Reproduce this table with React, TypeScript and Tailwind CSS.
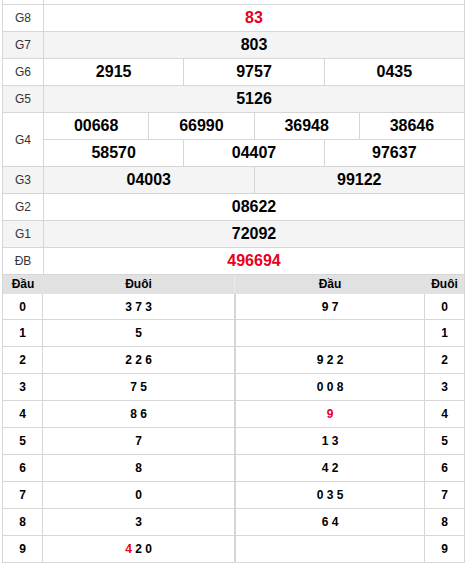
import React from "react";

const B = "border-[#d6d6d6]";

function Label({ children, tall }: { children: React.ReactNode; tall?: boolean }) {
  return (
    <div
      className={`w-[41px] shrink-0 border-r ${B} flex items-center justify-center text-[12px] text-[#333] ${tall ? "" : ""}`}
    >
      {children}
    </div>
  );
}

function Cells({ values, red }: { values: string[]; red?: boolean }) {
  return (
    <div className="flex flex-1">
      {values.map((v, i) => (
        <div
          key={i}
          className={`flex-1 flex items-center justify-center text-[16px] font-bold ${
            red ? "text-[#e8001c]" : "text-black"
          } ${i < values.length - 1 ? `border-r ${B}` : ""}`}
        >
          {v}
        </div>
      ))}
    </div>
  );
}

function Row({ label, values, red, alt }: { label: string; values: string[]; red?: boolean; alt?: boolean }) {
  return (
    <div className={`flex h-[27px] border-b ${B} ${alt ? "bg-[#f4f4f4]" : "bg-white"}`}>
      <Label>{label}</Label>
      <Cells values={values} red={red} />
    </div>
  );
}

type Part = { t: string; red?: boolean };

const left: Part[][] = [
  [{ t: "3 7 3" }],
  [{ t: "5" }],
  [{ t: "2 2 6" }],
  [{ t: "7 5" }],
  [{ t: "8 6" }],
  [{ t: "7" }],
  [{ t: "8" }],
  [{ t: "0" }],
  [{ t: "3" }],
  [{ t: "4", red: true }, { t: " 2 0" }],
];

const right: Part[][] = [
  [{ t: "9 7" }],
  [],
  [{ t: "9 2 2" }],
  [{ t: "0 0 8" }],
  [{ t: "9", red: true }],
  [{ t: "1 3" }],
  [{ t: "4 2" }],
  [{ t: "0 3 5" }],
  [{ t: "6 4" }],
  [],
];

function Parts({ parts }: { parts: Part[] }) {
  return (
    <>
      {parts.map((p, i) => (
        <span key={i} className={p.red ? "text-[#e8001c]" : "text-black"} style={{ whiteSpace: "pre" }}>
          {p.t}
        </span>
      ))}
    </>
  );
}

export default function App() {
  return (
    <div
      className="w-[470px] h-[568px] bg-white overflow-hidden"
      style={{ fontFamily: '"Liberation Sans", Arial, sans-serif' }}
    >
      <div className={`ml-[2px] w-[463px] border-l border-r ${B}`}>
        {/* cut-off previous row */}
        <div className="flex h-[4px]">
          <div className={`w-[41px] border-r ${B}`} />
        </div>
        <div className={`border-t ${B}`}>
          <Row label="G8" values={["83"]} red />
          <Row label="G7" values={["803"]} alt />
          <Row label="G6" values={["2915", "9757", "0435"]} />
          <Row label="G5" values={["5126"]} alt />
          <div className={`flex border-b ${B} bg-white`}>
            <Label>G4</Label>
            <div className="flex flex-col flex-1">
              <div className={`flex h-[27px] border-b ${B}`}>
                <Cells values={["00668", "66990", "36948", "38646"]} />
              </div>
              <div className="flex h-[26px]">
                <Cells values={["58570", "04407", "97637"]} />
              </div>
            </div>
          </div>
          <Row label="G3" values={["04003", "99122"]} alt />
          <Row label="G2" values={["08622"]} />
          <Row label="G1" values={["72092"]} alt />
          <Row label="ĐB" values={["496694"]} red />
        </div>

        {/* Đầu / Đuôi table */}
        <div className={`flex h-[19px] bg-[#e1e1e1] border-b border-b-[#e1e1e1] text-[12px] font-bold text-black`}>
          <div className="w-[40px] flex items-center justify-center">Đầu</div>
          <div className="w-[191px] flex items-center justify-center">Đuôi</div>
          <div className="w-px bg-[#ececec]" />
          <div className="w-[190px] flex items-center justify-center">Đầu</div>
          <div className="flex-1 flex items-center justify-center">Đuôi</div>
        </div>
        {left.map((l, i) => (
          <div
            key={i}
            className={`flex ${i === 0 ? "h-[26px]" : "h-[27px]"} border-b ${B} text-[12px] font-bold`}
          >
            <div className={`w-[40px] border-r ${B} flex items-center justify-center`}>{i}</div>
            <div className={`w-[192px] border-r ${B} flex items-center justify-center`}>
              <Parts parts={l} />
            </div>
            <div className={`w-[190px] border-l ${B} border-r flex items-center justify-center`}>
              <Parts parts={right[i]} />
            </div>
            <div className="flex-1 flex items-center justify-center">{i}</div>
          </div>
        ))}
      </div>
    </div>
  );
}
